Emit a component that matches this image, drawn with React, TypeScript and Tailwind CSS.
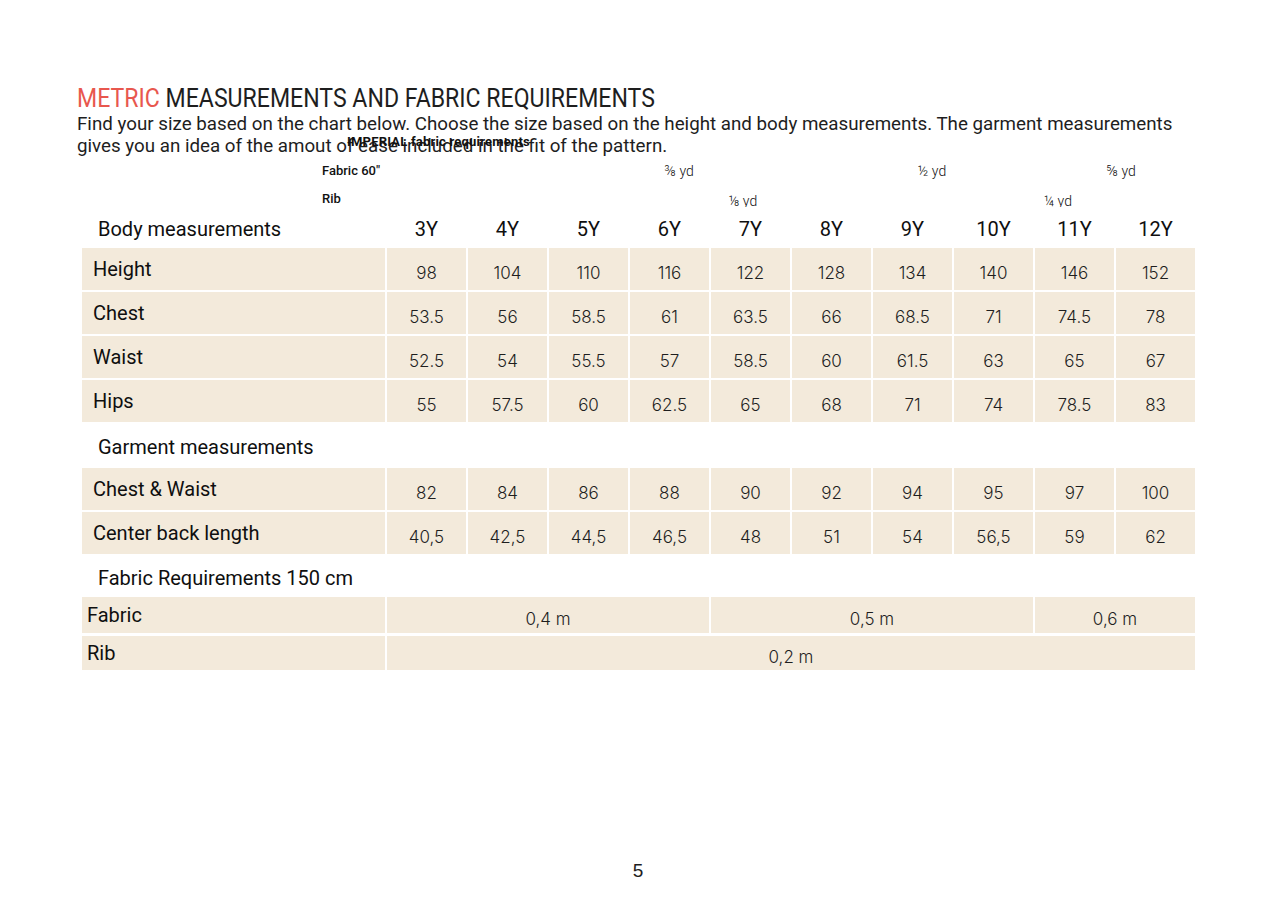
import React from "react";

const sizes = ["3Y", "4Y", "5Y", "6Y", "7Y", "8Y", "9Y", "10Y", "11Y", "12Y"];

const body: [string, string[]][] = [
  ["Height", ["98", "104", "110", "116", "122", "128", "134", "140", "146", "152"]],
  ["Chest", ["53.5", "56", "58.5", "61", "63.5", "66", "68.5", "71", "74.5", "78"]],
  ["Waist", ["52.5", "54", "55.5", "57", "58.5", "60", "61.5", "63", "65", "67"]],
  ["Hips", ["55", "57.5", "60", "62.5", "65", "68", "71", "74", "78.5", "83"]],
];

const garment: [string, string[]][] = [
  ["Chest & Waist", ["82", "84", "86", "88", "90", "92", "94", "95", "97", "100"]],
  ["Center back length", ["40,5", "42,5", "44,5", "46,5", "48", "51", "54", "56,5", "59", "62"]],
];

const grid = "grid grid-cols-[303px_repeat(10,79px)] gap-x-[2px]";
const num = "font-['Inter'] font-light text-[17px] leading-[20px] text-[#1e1e1e] flex items-center justify-center pt-[8px] bg-[#f3eadb]";
const label = "font-['Roboto'] font-normal text-[20px] leading-[24px] text-[#0f0f0f] bg-[#f3eadb] flex items-center pb-[1px]";
const heading = "font-['Roboto'] font-normal text-[20px] text-[#0f0f0f]";

function DataRows({ rows }: { rows: [string, string[]][] }) {
  return (
    <div className="flex flex-col gap-y-[2px]">
      {rows.map(([name, vals]) => (
        <div key={name} className={`${grid} h-[42px]`}>
          <div className={`${label} pl-[11px]`}>{name}</div>
          {vals.map((v, i) => (
            <div key={i} className={num}>
              {v}
            </div>
          ))}
        </div>
      ))}
    </div>
  );
}

export default function App() {
  return (
    <div className="w-[1276px] h-[909px] bg-white relative flex flex-col font-['Roboto'] text-[#1e1e1e]">
      <div className="pt-[83px] pl-[77px]">
        <h1 className="text-[26px] leading-[30px] font-normal origin-left scale-x-[0.888] whitespace-nowrap">
          <span className="text-[#e8574e]">METRIC</span> MEASUREMENTS AND FABRIC REQUIREMENTS
        </h1>
        <p className="text-[18.75px] leading-[22px] whitespace-nowrap">
          Find your size based on the chart below. Choose the size based on the height and body measurements. The garment measurements
          <br />
          gives you an idea of the amout of ease included in the fit of the pattern.
        </p>
      </div>

      <div className="ml-[82px] mt-[53px] w-[1113px]">
        <div className={`${grid} h-[38px]`}>
          <div className={`${heading} flex items-center pl-[16px] pb-[1px]`}>Body measurements</div>
          {sizes.map((s) => (
            <div key={s} className={`${heading} flex items-center justify-center pb-[1px]`}>
              {s}
            </div>
          ))}
        </div>
        <DataRows rows={body} />
        <div className={`${heading} h-[46px] flex items-center pl-[16px] pt-[3px]`}>Garment measurements</div>
        <DataRows rows={garment} />
        <div className={`${heading} h-[43px] flex items-center pl-[16px] pt-[4px]`}>Fabric Requirements 150 cm</div>
        <div className="flex flex-col gap-y-[3px]">
          <div className={`${grid} h-[36px]`}>
            <div className={`${label} pl-[5px]`}>Fabric</div>
            <div className={`${num} col-span-4`}>0,4 m</div>
            <div className={`${num} col-span-4`}>0,5 m</div>
            <div className={`${num} col-span-2`}>0,6 m</div>
          </div>
          <div className={`${grid} h-[34px]`}>
            <div className={`${label} pl-[5px]`}>Rib</div>
            <div className={`${num} col-span-10`}>0,2 m</div>
          </div>
        </div>
      </div>

      <div className="mt-auto pb-[24px] flex justify-center">
        <span className="font-['Liberation_Sans'] text-[19px]">5</span>
      </div>

      {/* IMPERIAL overlay */}
      <div className="absolute left-[347px] top-[135px] font-['Roboto'] font-bold text-[13px] leading-[14px] tracking-[0.2px] text-[#111] whitespace-nowrap">
        IMPERIAL fabric requirements
      </div>
      <div className="absolute left-[322px] top-[163px] font-['Roboto'] font-medium text-[13px] leading-[16px] text-[#111]">
        Fabric 60″
      </div>
      <div className="absolute left-[322px] top-[191px] font-['Roboto'] font-medium text-[13px] leading-[16px] text-[#111]">
        Rib
      </div>
      <div className="absolute left-[640px] top-[163px] w-[78px] text-center font-['Roboto'] font-light text-[14px] leading-[16px] text-[#111]">
        ⅜ yd
      </div>
      <div className="absolute left-[893px] top-[163px] w-[78px] text-center font-['Roboto'] font-light text-[14px] leading-[16px] text-[#111]">
        ½ yd
      </div>
      <div className="absolute left-[1082px] top-[163px] w-[78px] text-center font-['Roboto'] font-light text-[14px] leading-[16px] text-[#111]">
        ⅝ yd
      </div>
      <div className="absolute left-[704px] top-[193px] w-[78px] h-[14px] overflow-hidden text-center font-['Roboto'] font-light text-[14px] leading-[16px] text-[#111]">
        ⅛ yd
      </div>
      <div className="absolute left-[1019px] top-[193px] w-[78px] h-[14px] overflow-hidden text-center font-['Roboto'] font-light text-[14px] leading-[16px] text-[#111]">
        ¼ yd
      </div>
    </div>
  );
}
